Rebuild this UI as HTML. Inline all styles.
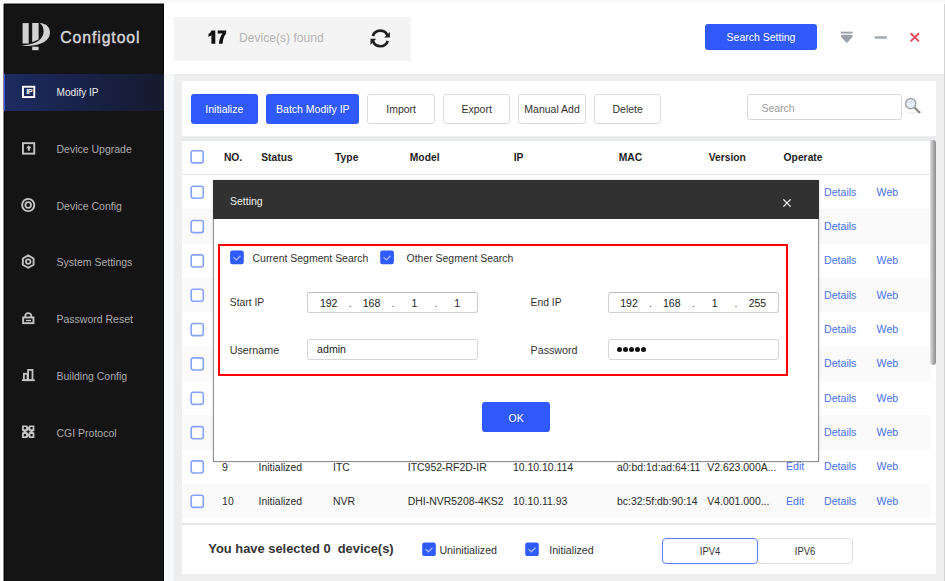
<!DOCTYPE html>
<html><head><meta charset="utf-8"><title>Configtool</title>
<style>
html,body{margin:0;padding:0;}
body{width:945px;height:581px;position:relative;overflow:hidden;background:#fdfdfd;font-family:"Liberation Sans", sans-serif;}
</style></head><body>
<div style="position:absolute;left:0px;top:0px;width:945px;height:3px;background:linear-gradient(#f7f7f7,#fbfbfb)"></div>
<div style="position:absolute;left:164px;top:3px;width:779.5px;height:71px;background:#ffffff"></div>
<div style="position:absolute;left:164px;top:74px;width:10px;height:507px;background:#f7f8fa"></div>
<div style="position:absolute;left:943.5px;top:4px;width:1.5px;height:577px;background:#d3d3d3"></div>
<div style="position:absolute;left:4px;top:4px;width:160px;height:577px;background:#141414;box-shadow:inset 1px 1px 0 #070707, inset -1px 0 0 #080808, -1px 0 0 #8a8a8a, 0 -1px 0 #8a8a8a"></div>
<div style="position:absolute;left:4px;top:73.5px;width:160px;height:37.7px;background:linear-gradient(90deg,#1d2b60 0%,#19224a 45%,#151a2d 100%);box-shadow:inset 1px 0 0 #3556e8"></div>
<svg style="position:absolute;left:15px;top:18px" width="40" height="37" viewBox="0 0 40 37">
<g fill="#d2d2d2">
<rect x="7.6" y="5.1" width="6.1" height="20.4"/>
<path d="M17.2 5.1 L23.6 5.1 L23.6 21.6 L17.2 24.2 Z"/>
<path d="M24.6 5 C31 5.3 35.3 9.3 35 15 C34.6 21.5 28.5 25.8 20 27.2 C14 28.2 8.5 28 5.4 27.4 C11 27.3 17 26.2 21.5 24 C26 21.6 28.6 17.8 28.6 13.2 C28.6 9.3 27.2 6.6 24.6 5 Z"/>
<rect x="17.2" y="28.7" width="6.4" height="3.5"/>
</g></svg>
<div style="position:absolute;left:60.3px;top:29.83px;font-size:15.8px;line-height:1;color:#d8d8d8;font-weight:normal;white-space:nowrap;letter-spacing:0.9px;-webkit-text-stroke:0.4px #d8d8d8">Configtool</div>
<div style="position:absolute;left:56.5px;top:88.05px;font-size:10.1px;line-height:1;color:#ececec;font-weight:normal;white-space:nowrap;">Modify IP</div>
<div style="position:absolute;left:56.5px;top:143.91px;font-size:10.5px;line-height:1;color:#ababab;font-weight:normal;white-space:nowrap;">Device Upgrade</div>
<div style="position:absolute;left:56.5px;top:200.71px;font-size:10.5px;line-height:1;color:#ababab;font-weight:normal;white-space:nowrap;">Device Config</div>
<div style="position:absolute;left:56.5px;top:257.41px;font-size:10.5px;line-height:1;color:#ababab;font-weight:normal;white-space:nowrap;">System Settings</div>
<div style="position:absolute;left:56.5px;top:314.11px;font-size:10.5px;line-height:1;color:#ababab;font-weight:normal;white-space:nowrap;">Password Reset</div>
<div style="position:absolute;left:56.5px;top:370.81px;font-size:10.5px;line-height:1;color:#ababab;font-weight:normal;white-space:nowrap;">Building Config</div>
<div style="position:absolute;left:56.5px;top:427.51px;font-size:10.5px;line-height:1;color:#ababab;font-weight:normal;white-space:nowrap;">CGI Protocol</div>
<svg style="position:absolute;left:16px;top:80px" width="24" height="24" viewBox="0 0 24 24"><rect x="6.95" y="6.75" width="11.3" height="10.3" fill="none" stroke="#fff" stroke-width="1.9"/><text x="13.3" y="14.4" font-family="Liberation Sans" font-weight="bold" font-size="7.4" fill="#fff" text-anchor="middle" letter-spacing="-0.5">IP</text></svg>
<svg style="position:absolute;left:16px;top:137px" width="24" height="24" viewBox="0 0 24 24"><rect x="6.95" y="6.15" width="11.3" height="10.5" fill="none" stroke="#c4c4c4" stroke-width="1.9"/><path d="M12.8 8.3 L15.6 11.3 L13.8 11.3 L13.8 13.8 L11.8 13.8 L11.8 11.3 L10 11.3 Z" fill="#c4c4c4"/></svg>
<svg style="position:absolute;left:16px;top:193px" width="24" height="24" viewBox="0 0 24 24"><circle cx="12.2" cy="12" r="6.1" fill="none" stroke="#c4c4c4" stroke-width="1.9"/><circle cx="12.2" cy="12" r="2.8" fill="none" stroke="#c4c4c4" stroke-width="1.8"/></svg>
<svg style="position:absolute;left:16px;top:250px" width="24" height="24" viewBox="0 0 24 24"><path d="M12.2 5.4 L17.57 8.5 L17.57 14.7 L12.2 17.8 L6.83 14.7 L6.83 8.5 Z" fill="none" stroke="#c4c4c4" stroke-width="1.9" stroke-linejoin="round"/><circle cx="12.2" cy="11.6" r="2.3" fill="none" stroke="#c4c4c4" stroke-width="1.7"/></svg>
<svg style="position:absolute;left:16px;top:307px" width="24" height="24" viewBox="0 0 24 24"><path d="M9.3 10.6 L9.3 9.1 A3 3 0 0 1 15.3 9.1 L15.3 10.6" fill="none" stroke="#c4c4c4" stroke-width="1.8"/><rect x="7.15" y="10.45" width="10.3" height="5.7" fill="none" stroke="#c4c4c4" stroke-width="1.9"/><rect x="10" y="12.8" width="5" height="1.4" fill="#c4c4c4"/></svg>
<svg style="position:absolute;left:16px;top:363px" width="24" height="24" viewBox="0 0 24 24"><path d="M6 17.2 L18.8 17.2" stroke="#c4c4c4" stroke-width="1.7"/><rect x="7.9" y="10.8" width="3.6" height="6.4" fill="none" stroke="#c4c4c4" stroke-width="1.8"/><rect x="12.1" y="6.9" width="4.4" height="10.3" fill="none" stroke="#c4c4c4" stroke-width="1.8"/></svg>
<svg style="position:absolute;left:16px;top:420px" width="24" height="24" viewBox="0 0 24 24"><path fill-rule="evenodd" fill="#c4c4c4" d="M6 5.4 L11.2 5.4 L12.2 7.4 L13.2 5.4 L18.4 5.4 L18.4 10.7 L16.4 11.7 L18.4 12.7 L18.4 18 L13.2 18 L12.2 16 L11.2 18 L6 18 L6 12.7 L8 11.7 L6 10.7 Z M7.8 7.1 L10 7.1 L10 9.3 L7.8 9.3 Z M14.4 7.1 L16.6 7.1 L16.6 9.3 L14.4 9.3 Z M7.8 14.1 L10 14.1 L10 16.3 L7.8 16.3 Z M14.4 14.1 L16.6 14.1 L16.6 16.3 L14.4 16.3 Z M12.2 9.2 L12.9 11 L14.7 11.7 L12.9 12.4 L12.2 14.2 L11.5 12.4 L9.7 11.7 L11.5 11 Z"/></svg>
<div style="position:absolute;left:174px;top:17px;width:237px;height:43.5px;background:#f4f4f4"></div>
<svg style="position:absolute;left:0;top:0" width="240" height="50" viewBox="0 0 240 50"><g fill="#111">
<path d="M211.4 30.5 L215.3 30.5 L215.3 43.7 L211.4 43.7 L211.4 35.3 C210.6 36 209.6 36.5 208.5 36.8 L208.5 33.7 C210 33.1 211 31.9 211.4 30.5 Z"/>
<path d="M217.7 30.5 L226.2 30.5 L226.2 33.2 C224 35.8 222.8 39.5 222.6 43.7 L218.9 43.7 C219.2 39.5 220.5 36 222.6 33.4 L217.7 33.4 Z"/>
</g></svg>
<div style="position:absolute;left:239px;top:31.76px;font-size:12.1px;line-height:1;color:#b4b4b4;font-weight:normal;white-space:nowrap;">Device(s) found</div>
<svg style="position:absolute;left:366px;top:25px" width="28" height="26" viewBox="0 0 28 26">
<g fill="none" stroke="#202020" stroke-width="2.7">
<path d="M6.83 10.97 A7.85 7.85 0 0 1 21.68 10.72"/>
<path d="M21.77 15.83 A7.85 7.85 0 0 1 6.92 16.08"/>
</g>
<path d="M23.9 6.9 L23.9 12.6 L18.2 12.6 Z" fill="#202020"/>
<path d="M4.5 13.8 L4.5 19.7 L10.2 13.8 Z" fill="#202020"/>
</svg>
<div style="position:absolute;left:705px;top:24px;width:112px;height:26px;background:#3059fc;border-radius:3px"></div>
<div style="position:absolute;left:611px;width:300px;text-align:center;top:32.11px;font-size:10.5px;line-height:1;color:#fff;font-weight:normal;white-space:nowrap;">Search Setting</div>
<svg style="position:absolute;left:835px;top:25px" width="90" height="25" viewBox="0 0 90 25">
<rect x="5.9" y="6.7" width="11.7" height="1.8" fill="#9aa1ab"/>
<path d="M6.2 9.8 L17.4 9.8 L17.4 12 L12.4 17.4 Q11.8 18 11.2 17.4 L6.2 12 Z" fill="#9aa1ab"/>
<rect x="39.8" y="11.2" width="12.1" height="2.6" fill="#a6acb4"/>
<path d="M75.6 8.2 L84 16.4 M84 8.2 L75.6 16.4" stroke="#e34a5c" stroke-width="1.9"/>
</svg>
<div style="position:absolute;left:174px;top:74px;width:769.5px;height:507px;background:#eeeeee"></div>
<div style="position:absolute;left:182px;top:81.3px;width:754px;height:55.2px;background:#fff"></div>
<div style="position:absolute;left:182px;top:136.5px;width:754px;height:4.0px;background:#e9ebef"></div>
<div style="position:absolute;left:182px;top:140.5px;width:754px;height:382.1px;background:#fff"></div>
<div style="position:absolute;left:182px;top:522.6px;width:754px;height:2.4px;background:#e6e6e6"></div>
<div style="position:absolute;left:182px;top:525px;width:754px;height:49.2px;background:#fff"></div>
<div style="position:absolute;left:190.6px;top:94.2px;width:67.4px;height:30.0px;background:#3059fc;border-radius:3px"></div>
<div style="position:absolute;left:74.3px;width:300px;text-align:center;top:104.31px;font-size:10.5px;line-height:1;color:#fff;font-weight:normal;white-space:nowrap;">Initialize</div>
<div style="position:absolute;left:266.3px;top:94.2px;width:93.1px;height:30.0px;background:#3059fc;border-radius:3px"></div>
<div style="position:absolute;left:162.85px;width:300px;text-align:center;top:104.31px;font-size:10.5px;line-height:1;color:#fff;font-weight:normal;white-space:nowrap;">Batch Modify IP</div>
<div style="position:absolute;left:367.3px;top:94.2px;width:67.7px;height:30.0px;background:#fff;border:1px solid #dcdcdc;border-radius:3px;box-sizing:border-box"></div>
<div style="position:absolute;left:251.15px;width:300px;text-align:center;top:104.31px;font-size:10.5px;line-height:1;color:#333;font-weight:normal;white-space:nowrap;">Import</div>
<div style="position:absolute;left:443.2px;top:94.2px;width:67.0px;height:30.0px;background:#fff;border:1px solid #dcdcdc;border-radius:3px;box-sizing:border-box"></div>
<div style="position:absolute;left:326.7px;width:300px;text-align:center;top:104.31px;font-size:10.5px;line-height:1;color:#333;font-weight:normal;white-space:nowrap;">Export</div>
<div style="position:absolute;left:518.4px;top:94.2px;width:67.3px;height:30.0px;background:#fff;border:1px solid #dcdcdc;border-radius:3px;box-sizing:border-box"></div>
<div style="position:absolute;left:402.05px;width:300px;text-align:center;top:104.31px;font-size:10.5px;line-height:1;color:#333;font-weight:normal;white-space:nowrap;">Manual Add</div>
<div style="position:absolute;left:594px;top:94.2px;width:67.3px;height:30.0px;background:#fff;border:1px solid #dcdcdc;border-radius:3px;box-sizing:border-box"></div>
<div style="position:absolute;left:477.65px;width:300px;text-align:center;top:104.31px;font-size:10.5px;line-height:1;color:#333;font-weight:normal;white-space:nowrap;">Delete</div>
<div style="position:absolute;left:746.8px;top:94.2px;width:154.8px;height:25.6px;background:#fff;border:1px solid #d8d8d8;border-radius:3px;box-sizing:border-box"></div>
<div style="position:absolute;left:761.4px;top:102.61px;font-size:10.5px;line-height:1;color:#9a9a9a;font-weight:normal;white-space:nowrap;">Search</div>
<svg style="position:absolute;left:900px;top:94px" width="26" height="26" viewBox="0 0 26 26">
<ellipse cx="12.5" cy="18.8" rx="6.5" ry="0.9" fill="#efefef"/>
<path d="M14.3 13.3 L19.5 18.3" stroke="#8c8c8c" stroke-width="2.3" stroke-linecap="round"/>
<circle cx="10.7" cy="9.6" r="5.1" fill="#e5eefb" stroke="#a4a4a4" stroke-width="1.4"/>
<path d="M7.2 8.6 C9 7.4 12.4 7.4 14.2 8.6" stroke="#d3dff0" stroke-width="1" fill="none"/>
</svg>
<svg style="position:absolute;left:189px;top:149px;overflow:visible" width="18" height="18" viewBox="0 0 18 18"><rect x="2.10" y="1.80" width="12.10" height="12.10" rx="2.2" fill="#fff" stroke="#86a2f9" stroke-width="1.6"/></svg>
<div style="position:absolute;left:182px;top:173.9px;width:747.5px;height:1.0px;background:#e6e6e6"></div>
<div style="position:absolute;left:223.9px;top:152.88px;font-size:10.3px;line-height:1;color:#1e1e1e;font-weight:bold;white-space:nowrap;">NO.</div>
<div style="position:absolute;left:261.2px;top:152.88px;font-size:10.3px;line-height:1;color:#1e1e1e;font-weight:bold;white-space:nowrap;">Status</div>
<div style="position:absolute;left:335.1px;top:152.88px;font-size:10.3px;line-height:1;color:#1e1e1e;font-weight:bold;white-space:nowrap;">Type</div>
<div style="position:absolute;left:409.8px;top:152.88px;font-size:10.3px;line-height:1;color:#1e1e1e;font-weight:bold;white-space:nowrap;">Model</div>
<div style="position:absolute;left:513.7px;top:152.88px;font-size:10.3px;line-height:1;color:#1e1e1e;font-weight:bold;white-space:nowrap;">IP</div>
<div style="position:absolute;left:618.7px;top:152.88px;font-size:10.3px;line-height:1;color:#1e1e1e;font-weight:bold;white-space:nowrap;">MAC</div>
<div style="position:absolute;left:708.7px;top:152.88px;font-size:10.3px;line-height:1;color:#1e1e1e;font-weight:bold;white-space:nowrap;">Version</div>
<div style="position:absolute;left:783.6px;top:152.88px;font-size:10.3px;line-height:1;color:#1e1e1e;font-weight:bold;white-space:nowrap;">Operate</div>
<svg style="position:absolute;left:189px;top:184px;overflow:visible" width="18" height="18" viewBox="0 0 18 18"><rect x="2.20" y="2.20" width="12.10" height="12.10" rx="2.2" fill="#fff" stroke="#86a2f9" stroke-width="1.6"/></svg>
<div style="position:absolute;left:824px;top:186.63px;font-size:10.6px;line-height:1;color:#4870f0;font-weight:normal;white-space:nowrap;">Details</div>
<div style="position:absolute;left:876.6px;top:186.63px;font-size:10.6px;line-height:1;color:#4870f0;font-weight:normal;white-space:nowrap;">Web</div>
<div style="position:absolute;left:182px;top:209.34px;width:747.6px;height:34.34px;background:#fafafa"></div>
<svg style="position:absolute;left:189px;top:218px;overflow:visible" width="18" height="18" viewBox="0 0 18 18"><rect x="2.20" y="2.54" width="12.10" height="12.10" rx="2.2" fill="#fff" stroke="#86a2f9" stroke-width="1.6"/></svg>
<div style="position:absolute;left:824px;top:220.97px;font-size:10.6px;line-height:1;color:#4870f0;font-weight:normal;white-space:nowrap;">Details</div>
<svg style="position:absolute;left:189px;top:253px;overflow:visible" width="18" height="18" viewBox="0 0 18 18"><rect x="2.20" y="1.88" width="12.10" height="12.10" rx="2.2" fill="#fff" stroke="#86a2f9" stroke-width="1.6"/></svg>
<div style="position:absolute;left:824px;top:255.31px;font-size:10.6px;line-height:1;color:#4870f0;font-weight:normal;white-space:nowrap;">Details</div>
<div style="position:absolute;left:876.6px;top:255.31px;font-size:10.6px;line-height:1;color:#4870f0;font-weight:normal;white-space:nowrap;">Web</div>
<div style="position:absolute;left:182px;top:278.02px;width:747.6px;height:34.34px;background:#fafafa"></div>
<svg style="position:absolute;left:189px;top:287px;overflow:visible" width="18" height="18" viewBox="0 0 18 18"><rect x="2.20" y="2.22" width="12.10" height="12.10" rx="2.2" fill="#fff" stroke="#86a2f9" stroke-width="1.6"/></svg>
<div style="position:absolute;left:824px;top:289.65px;font-size:10.6px;line-height:1;color:#4870f0;font-weight:normal;white-space:nowrap;">Details</div>
<div style="position:absolute;left:876.6px;top:289.65px;font-size:10.6px;line-height:1;color:#4870f0;font-weight:normal;white-space:nowrap;">Web</div>
<svg style="position:absolute;left:189px;top:321px;overflow:visible" width="18" height="18" viewBox="0 0 18 18"><rect x="2.20" y="2.56" width="12.10" height="12.10" rx="2.2" fill="#fff" stroke="#86a2f9" stroke-width="1.6"/></svg>
<div style="position:absolute;left:824px;top:323.99px;font-size:10.6px;line-height:1;color:#4870f0;font-weight:normal;white-space:nowrap;">Details</div>
<div style="position:absolute;left:876.6px;top:323.99px;font-size:10.6px;line-height:1;color:#4870f0;font-weight:normal;white-space:nowrap;">Web</div>
<div style="position:absolute;left:182px;top:346.70000000000005px;width:747.6px;height:34.34px;background:#fafafa"></div>
<svg style="position:absolute;left:189px;top:356px;overflow:visible" width="18" height="18" viewBox="0 0 18 18"><rect x="2.20" y="1.90" width="12.10" height="12.10" rx="2.2" fill="#fff" stroke="#86a2f9" stroke-width="1.6"/></svg>
<div style="position:absolute;left:824px;top:358.33px;font-size:10.6px;line-height:1;color:#4870f0;font-weight:normal;white-space:nowrap;">Details</div>
<div style="position:absolute;left:876.6px;top:358.33px;font-size:10.6px;line-height:1;color:#4870f0;font-weight:normal;white-space:nowrap;">Web</div>
<svg style="position:absolute;left:189px;top:390px;overflow:visible" width="18" height="18" viewBox="0 0 18 18"><rect x="2.20" y="2.24" width="12.10" height="12.10" rx="2.2" fill="#fff" stroke="#86a2f9" stroke-width="1.6"/></svg>
<div style="position:absolute;left:824px;top:392.67px;font-size:10.6px;line-height:1;color:#4870f0;font-weight:normal;white-space:nowrap;">Details</div>
<div style="position:absolute;left:876.6px;top:392.67px;font-size:10.6px;line-height:1;color:#4870f0;font-weight:normal;white-space:nowrap;">Web</div>
<div style="position:absolute;left:182px;top:415.38px;width:747.6px;height:34.34px;background:#fafafa"></div>
<svg style="position:absolute;left:189px;top:424px;overflow:visible" width="18" height="18" viewBox="0 0 18 18"><rect x="2.20" y="2.58" width="12.10" height="12.10" rx="2.2" fill="#fff" stroke="#86a2f9" stroke-width="1.6"/></svg>
<div style="position:absolute;left:824px;top:427.01px;font-size:10.6px;line-height:1;color:#4870f0;font-weight:normal;white-space:nowrap;">Details</div>
<div style="position:absolute;left:876.6px;top:427.01px;font-size:10.6px;line-height:1;color:#4870f0;font-weight:normal;white-space:nowrap;">Web</div>
<svg style="position:absolute;left:189px;top:459px;overflow:visible" width="18" height="18" viewBox="0 0 18 18"><rect x="2.20" y="1.92" width="12.10" height="12.10" rx="2.2" fill="#fff" stroke="#86a2f9" stroke-width="1.6"/></svg>
<div style="position:absolute;left:222.1px;top:462.77px;font-size:10.45px;line-height:1;color:#2a2a2a;font-weight:normal;white-space:nowrap;">9</div>
<div style="position:absolute;left:258.6px;top:462.77px;font-size:10.45px;line-height:1;color:#2a2a2a;font-weight:normal;white-space:nowrap;">Initialized</div>
<div style="position:absolute;left:333px;top:462.77px;font-size:10.45px;line-height:1;color:#2a2a2a;font-weight:normal;white-space:nowrap;">ITC</div>
<div style="position:absolute;left:407.8px;top:462.77px;font-size:10.45px;line-height:1;color:#2a2a2a;font-weight:normal;white-space:nowrap;">ITC952-RF2D-IR</div>
<div style="position:absolute;left:513px;top:462.77px;font-size:10.45px;line-height:1;color:#2a2a2a;font-weight:normal;white-space:nowrap;">10.10.10.114</div>
<div style="position:absolute;left:617px;top:462.77px;font-size:10.45px;line-height:1;color:#2a2a2a;font-weight:normal;white-space:nowrap;">a0:bd:1d:ad:64:11</div>
<div style="position:absolute;left:707.3px;top:462.77px;font-size:10.45px;line-height:1;color:#2a2a2a;font-weight:normal;white-space:nowrap;">V2.623.000A...</div>
<div style="position:absolute;left:786px;top:461.35px;font-size:10.6px;line-height:1;color:#4870f0;font-weight:normal;white-space:nowrap;">Edit</div>
<div style="position:absolute;left:824px;top:461.35px;font-size:10.6px;line-height:1;color:#4870f0;font-weight:normal;white-space:nowrap;">Details</div>
<div style="position:absolute;left:876.6px;top:461.35px;font-size:10.6px;line-height:1;color:#4870f0;font-weight:normal;white-space:nowrap;">Web</div>
<div style="position:absolute;left:182px;top:484.06000000000006px;width:747.6px;height:34.34px;background:#fafafa"></div>
<svg style="position:absolute;left:189px;top:493px;overflow:visible" width="18" height="18" viewBox="0 0 18 18"><rect x="2.20" y="2.26" width="12.10" height="12.10" rx="2.2" fill="#fff" stroke="#86a2f9" stroke-width="1.6"/></svg>
<div style="position:absolute;left:222.1px;top:497.11px;font-size:10.45px;line-height:1;color:#2a2a2a;font-weight:normal;white-space:nowrap;">10</div>
<div style="position:absolute;left:258.6px;top:497.11px;font-size:10.45px;line-height:1;color:#2a2a2a;font-weight:normal;white-space:nowrap;">Initialized</div>
<div style="position:absolute;left:333px;top:497.11px;font-size:10.45px;line-height:1;color:#2a2a2a;font-weight:normal;white-space:nowrap;">NVR</div>
<div style="position:absolute;left:407.8px;top:497.11px;font-size:10.45px;line-height:1;color:#2a2a2a;font-weight:normal;white-space:nowrap;">DHI-NVR5208-4KS2</div>
<div style="position:absolute;left:513px;top:497.11px;font-size:10.45px;line-height:1;color:#2a2a2a;font-weight:normal;white-space:nowrap;">10.10.11.93</div>
<div style="position:absolute;left:617px;top:497.11px;font-size:10.45px;line-height:1;color:#2a2a2a;font-weight:normal;white-space:nowrap;">bc:32:5f:db:90:14</div>
<div style="position:absolute;left:707.3px;top:497.11px;font-size:10.45px;line-height:1;color:#2a2a2a;font-weight:normal;white-space:nowrap;">V4.001.000...</div>
<div style="position:absolute;left:786px;top:495.69px;font-size:10.6px;line-height:1;color:#4870f0;font-weight:normal;white-space:nowrap;">Edit</div>
<div style="position:absolute;left:824px;top:495.69px;font-size:10.6px;line-height:1;color:#4870f0;font-weight:normal;white-space:nowrap;">Details</div>
<div style="position:absolute;left:876.6px;top:495.69px;font-size:10.6px;line-height:1;color:#4870f0;font-weight:normal;white-space:nowrap;">Web</div>
<div style="position:absolute;left:930.3px;top:140.3px;width:5.7px;height:224.7px;background:linear-gradient(90deg,#e2e2e2,#a9a9a9 60%,#8e8e8e);border-radius:0 3px 3px 3px"></div>
<div style="position:absolute;left:208.3px;top:543.48px;font-size:12.9px;line-height:1;color:#333;font-weight:bold;white-space:nowrap;">You have selected 0&nbsp; device(s)</div>
<svg style="position:absolute;left:421px;top:541px;overflow:visible" width="18" height="18" viewBox="0 0 18 18"><g transform="translate(1.20 1.50) scale(1.0000)"><rect width="13.6" height="13.6" rx="2.2" fill="#2f5bfd"/><path d="M3.3 6.6 L6.1 9.3 L10.3 5.2" fill="none" stroke="#a9bbff" stroke-width="1.3"/></g></svg>
<div style="position:absolute;left:439.4px;top:544.94px;font-size:10.7px;line-height:1;color:#333;font-weight:normal;white-space:nowrap;">Uninitialized</div>
<svg style="position:absolute;left:524px;top:541px;overflow:visible" width="18" height="18" viewBox="0 0 18 18"><g transform="translate(1.20 1.50) scale(1.0000)"><rect width="13.6" height="13.6" rx="2.2" fill="#2f5bfd"/><path d="M3.3 6.6 L6.1 9.3 L10.3 5.2" fill="none" stroke="#a9bbff" stroke-width="1.3"/></g></svg>
<div style="position:absolute;left:549.2px;top:544.94px;font-size:10.7px;line-height:1;color:#333;font-weight:normal;white-space:nowrap;">Initialized</div>
<div style="position:absolute;left:662.3px;top:538.3px;width:95.3px;height:25.8px;border:1.3px solid #5f7ff5;border-radius:4px;box-sizing:border-box;background:#fff;z-index:2"></div>
<div style="position:absolute;left:756.6px;top:538.3px;width:96.0px;height:25.8px;border:1px solid #dedede;border-radius:4px;box-sizing:border-box;background:#fff"></div>
<div style="position:absolute;left:560px;width:300px;text-align:center;top:546.06px;font-size:10.8px;line-height:1;color:#333;font-weight:normal;white-space:nowrap;z-index:3;transform:scaleX(0.87)">IPV4</div>
<div style="position:absolute;left:655px;width:300px;text-align:center;top:546.06px;font-size:10.8px;line-height:1;color:#333;font-weight:normal;white-space:nowrap;transform:scaleX(0.87)">IPV6</div>
<div style="position:absolute;left:212.6px;top:180.2px;width:606.0px;height:281.9px;background:#fff;border:1px solid #8f8f8f;border-top:none;box-sizing:border-box;box-shadow:0 0 3px rgba(0,0,0,0.15)"></div>
<div style="position:absolute;left:212.6px;top:180.2px;width:606.0px;height:38.4px;background:#313131"></div>
<div style="position:absolute;left:230px;top:195.61px;font-size:10.5px;line-height:1;color:#f0f0f0;font-weight:normal;white-space:nowrap;">Setting</div>
<svg style="position:absolute;left:782px;top:197.5px" width="10" height="10" viewBox="0 0 10 10">
<path d="M1.4 1.4 L8.6 8.6 M8.6 1.4 L1.4 8.6" stroke="#fff" stroke-width="1.3"/></svg>
<div style="position:absolute;left:218.3px;top:243.5px;width:569.7px;height:132.0px;border:2.4px solid #ff0000;box-sizing:border-box"></div>
<svg style="position:absolute;left:229px;top:249px;overflow:visible" width="18" height="18" viewBox="0 0 18 18"><g transform="translate(1.10 1.50) scale(1.0074)"><rect width="13.6" height="13.6" rx="2.2" fill="#2f5bfd"/><path d="M3.3 6.6 L6.1 9.3 L10.3 5.2" fill="none" stroke="#a9bbff" stroke-width="1.3"/></g></svg>
<div style="position:absolute;left:252.5px;top:254.14px;font-size:10.47px;line-height:1;color:#333;font-weight:normal;white-space:nowrap;">Current Segment Search</div>
<svg style="position:absolute;left:379px;top:249px;overflow:visible" width="18" height="18" viewBox="0 0 18 18"><g transform="translate(1.20 1.50) scale(1.0074)"><rect width="13.6" height="13.6" rx="2.2" fill="#2f5bfd"/><path d="M3.3 6.6 L6.1 9.3 L10.3 5.2" fill="none" stroke="#a9bbff" stroke-width="1.3"/></g></svg>
<div style="position:absolute;left:406.6px;top:254.15px;font-size:10.45px;line-height:1;color:#333;font-weight:normal;white-space:nowrap;">Other Segment Search</div>
<div style="position:absolute;left:229.8px;top:298.48px;font-size:10.3px;line-height:1;color:#333;font-weight:normal;white-space:nowrap;">Start IP</div>
<div style="position:absolute;left:530.6px;top:298.48px;font-size:10.3px;line-height:1;color:#333;font-weight:normal;white-space:nowrap;">End IP</div>
<div style="position:absolute;left:229.8px;top:344.94px;font-size:10.7px;line-height:1;color:#333;font-weight:normal;white-space:nowrap;">Username</div>
<div style="position:absolute;left:530.6px;top:344.94px;font-size:10.7px;line-height:1;color:#333;font-weight:normal;white-space:nowrap;">Password</div>
<div style="position:absolute;left:307.4px;top:291.7px;width:171.0px;height:21.1px;border:1px solid #cfcfcf;border-top-color:#bdbdbd;border-radius:3px;box-sizing:border-box;background:#fff"></div>
<div style="position:absolute;left:178.7px;width:300px;text-align:center;top:297.61px;font-size:10.5px;line-height:1;color:#222;font-weight:normal;white-space:nowrap;">192</div>
<div style="position:absolute;left:200.1px;width:300px;text-align:center;top:298.11px;font-size:10.5px;line-height:1;color:#555;font-weight:normal;white-space:nowrap;">.</div>
<div style="position:absolute;left:221.5px;width:300px;text-align:center;top:297.61px;font-size:10.5px;line-height:1;color:#222;font-weight:normal;white-space:nowrap;">168</div>
<div style="position:absolute;left:242.9px;width:300px;text-align:center;top:298.11px;font-size:10.5px;line-height:1;color:#555;font-weight:normal;white-space:nowrap;">.</div>
<div style="position:absolute;left:264.3px;width:300px;text-align:center;top:297.61px;font-size:10.5px;line-height:1;color:#222;font-weight:normal;white-space:nowrap;">1</div>
<div style="position:absolute;left:285.7px;width:300px;text-align:center;top:298.11px;font-size:10.5px;line-height:1;color:#555;font-weight:normal;white-space:nowrap;">.</div>
<div style="position:absolute;left:307.1px;width:300px;text-align:center;top:297.61px;font-size:10.5px;line-height:1;color:#222;font-weight:normal;white-space:nowrap;">1</div>
<div style="position:absolute;left:607.7px;top:291.7px;width:171.0px;height:21.1px;border:1px solid #cfcfcf;border-top-color:#bdbdbd;border-radius:3px;box-sizing:border-box;background:#fff"></div>
<div style="position:absolute;left:479.0px;width:300px;text-align:center;top:297.61px;font-size:10.5px;line-height:1;color:#222;font-weight:normal;white-space:nowrap;">192</div>
<div style="position:absolute;left:500.4px;width:300px;text-align:center;top:298.11px;font-size:10.5px;line-height:1;color:#555;font-weight:normal;white-space:nowrap;">.</div>
<div style="position:absolute;left:521.8px;width:300px;text-align:center;top:297.61px;font-size:10.5px;line-height:1;color:#222;font-weight:normal;white-space:nowrap;">168</div>
<div style="position:absolute;left:543.2px;width:300px;text-align:center;top:298.11px;font-size:10.5px;line-height:1;color:#555;font-weight:normal;white-space:nowrap;">.</div>
<div style="position:absolute;left:564.6px;width:300px;text-align:center;top:297.61px;font-size:10.5px;line-height:1;color:#222;font-weight:normal;white-space:nowrap;">1</div>
<div style="position:absolute;left:586.0px;width:300px;text-align:center;top:298.11px;font-size:10.5px;line-height:1;color:#555;font-weight:normal;white-space:nowrap;">.</div>
<div style="position:absolute;left:607.4px;width:300px;text-align:center;top:297.61px;font-size:10.5px;line-height:1;color:#222;font-weight:normal;white-space:nowrap;">255</div>
<div style="position:absolute;left:307.4px;top:339.3px;width:171.1px;height:20.7px;border:1px solid #d6d6d6;border-radius:3px;box-sizing:border-box;background:#fff"></div>
<div style="position:absolute;left:317.1px;top:344.43px;font-size:10.6px;line-height:1;color:#222;font-weight:normal;white-space:nowrap;">admin</div>
<div style="position:absolute;left:607.7px;top:339.3px;width:170.9px;height:20.7px;border:1px solid #d6d6d6;border-radius:3px;box-sizing:border-box;background:#fff"></div>
<div style="position:absolute;left:617px;top:346.5px;font-size:0"><span style="display:inline-block;width:5px;height:5px;border-radius:50%;background:#111;margin-right:1.1px"></span><span style="display:inline-block;width:5px;height:5px;border-radius:50%;background:#111;margin-right:1.1px"></span><span style="display:inline-block;width:5px;height:5px;border-radius:50%;background:#111;margin-right:1.1px"></span><span style="display:inline-block;width:5px;height:5px;border-radius:50%;background:#111;margin-right:1.1px"></span><span style="display:inline-block;width:5px;height:5px;border-radius:50%;background:#111;margin-right:1.1px"></span></div>
<div style="position:absolute;left:482.4px;top:402.4px;width:67.5px;height:29.9px;background:#3059fc;border-radius:3px"></div>
<div style="position:absolute;left:366.2px;width:300px;text-align:center;top:412.71px;font-size:10.5px;line-height:1;color:#fff;font-weight:normal;white-space:nowrap;">OK</div>
</body></html>
